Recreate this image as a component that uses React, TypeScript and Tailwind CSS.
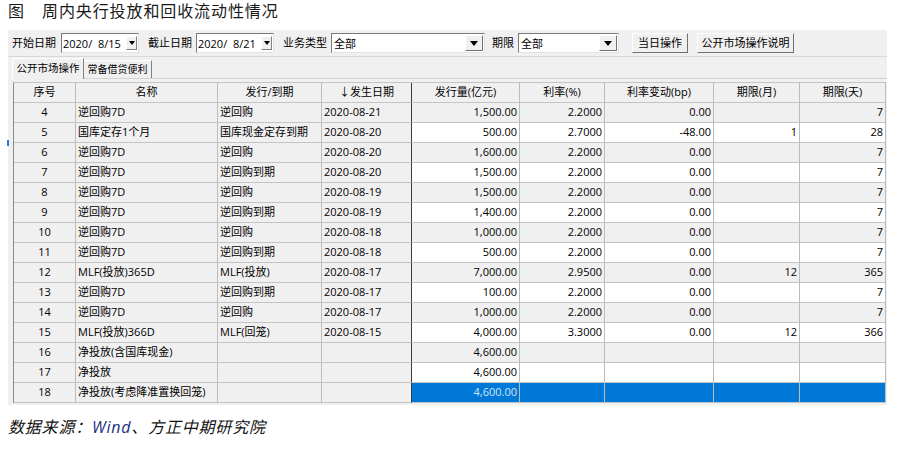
import React from "react";

const F = "font-['Open_Sans','Noto_Sans_CJK_SC',sans-serif]";
const COLS = "grid grid-cols-[62px_142px_104px_90px_108px_85px_109px_86px_86px]";

type Row = [string, string, string, string, string, string, string, string, string];

const rows: Row[] = [
  ["4", "逆回购7D", "逆回购", "2020-08-21", "1,500.00", "2.2000", "0.00", "", "7"],
  ["5", "国库定存1个月", "国库现金定存到期", "2020-08-20", "500.00", "2.7000", "-48.00", "1", "28"],
  ["6", "逆回购7D", "逆回购", "2020-08-20", "1,600.00", "2.2000", "0.00", "", "7"],
  ["7", "逆回购7D", "逆回购到期", "2020-08-20", "1,500.00", "2.2000", "0.00", "", "7"],
  ["8", "逆回购7D", "逆回购", "2020-08-19", "1,500.00", "2.2000", "0.00", "", "7"],
  ["9", "逆回购7D", "逆回购到期", "2020-08-19", "1,400.00", "2.2000", "0.00", "", "7"],
  ["10", "逆回购7D", "逆回购", "2020-08-18", "1,000.00", "2.2000", "0.00", "", "7"],
  ["11", "逆回购7D", "逆回购到期", "2020-08-18", "500.00", "2.2000", "0.00", "", "7"],
  ["12", "MLF(投放)365D", "MLF(投放)", "2020-08-17", "7,000.00", "2.9500", "0.00", "12", "365"],
  ["13", "逆回购7D", "逆回购到期", "2020-08-17", "100.00", "2.2000", "0.00", "", "7"],
  ["14", "逆回购7D", "逆回购", "2020-08-17", "1,000.00", "2.2000", "0.00", "", "7"],
  ["15", "MLF(投放)366D", "MLF(回笼)", "2020-08-15", "4,000.00", "3.3000", "0.00", "12", "366"],
  ["16", "净投放(含国库现金)", "", "", "4,600.00", "", "", "", ""],
  ["17", "净投放", "", "", "4,600.00", "", "", "", ""],
  ["18", "净投放(考虑降准置换回笼)", "", "", "4,600.00", "", "", "", ""],
];

const headers = ["序号", "名称", "发行/到期", "↓发生日期", "发行量(亿元)", "利率(%)", "利率变动(bp)", "期限(月)", "期限(天)"];

function Tri() {
  return (
    <svg width="8" height="5" viewBox="0 0 8 5">
      <path d="M0 0 H8 L4 5 Z" fill="#000" />
    </svg>
  );
}

function DateBox({ value }: { value: string }) {
  return (
    <div className="flex h-[20px] w-[78px] items-center justify-between border-l border-t border-l-[#7a7a7a] border-t-[#7a7a7a] border-b border-r border-b-[#e3e3e3] border-r-[#e3e3e3] bg-white pl-[1px] pr-[1px]">
      <span className="whitespace-pre text-[11px] leading-none text-black">{value}</span>
      <div className="flex h-[14px] w-[11px] items-center justify-center border border-b-[#808080] border-r-[#808080] border-l-white border-t-white bg-[#f0f0f0]">
        <svg width="6" height="4" viewBox="0 0 6 4">
          <path d="M0 0 H6 L3 4 Z" fill="#000" />
        </svg>
      </div>
    </div>
  );
}

function Combo({ w, value }: { w: string; value: string }) {
  return (
    <div className={`flex h-[20px] ${w} items-center justify-between border-l border-t border-l-[#7a7a7a] border-t-[#7a7a7a] border-b border-r border-b-[#e3e3e3] border-r-[#e3e3e3] bg-white pl-[2px] pr-[1px]`}>
      <span className="text-[11px] leading-none text-black">{value}</span>
      <div className="flex h-[16px] w-[18px] items-center justify-center border border-b-[#707070] border-r-[#707070] border-l-white border-t-white bg-[#f0f0f0]">
        <Tri />
      </div>
    </div>
  );
}

function Btn({ w, label, ml }: { w: string; label: string; ml: string }) {
  return (
    <div className={`${ml} flex h-[20px] ${w} items-center justify-center border border-b-[#707070] border-r-[#707070] border-l-white border-t-white bg-[#f0f0f0] text-[11px] text-black`}>
      {label}
    </div>
  );
}

export default function App() {
  return (
    <div className={`${F} relative h-[449px] w-[908px] overflow-hidden bg-white text-black`}>
      <div className="h-[22px] pl-[8px] text-[16px] leading-[22px] text-[#1a1a1a]">
        <span>图</span>
        <span className="ml-[18px] tracking-[0.9px]">周内央行投放和回收流动性情况</span>
      </div>

      <div className="relative ml-[8px] mt-[8px] w-[879px] bg-[#f0f0f0] pb-[2px]">
        {/* toolbar */}
        <div className="flex h-[26px] items-center pl-[4px] text-[11px]">
          <span>开始日期</span>
          <div className="ml-[5px]"><DateBox value="2020/  8/15" /></div>
          <span className="ml-[9px]">截止日期</span>
          <div className="ml-[4px]"><DateBox value="2020/  8/21" /></div>
          <span className="ml-[9px]">业务类型</span>
          <div className="ml-[4px]"><Combo w="w-[154px]" value="全部" /></div>
          <span className="ml-[7px]">期限</span>
          <div className="ml-[4px]"><Combo w="w-[101px]" value="全部" /></div>
          <Btn ml="ml-[13px]" w="w-[56px]" label="当日操作" />
          <Btn ml="ml-[9px]" w="w-[97px]" label="公开市场操作说明" />
        </div>
        <div className="h-[1px] bg-[#d8d8d8]" />
        {/* tabs */}
        <div className="relative flex h-[22px] items-end pl-[4px]">
          <div className="absolute bottom-0 left-[76px] right-0 h-[1px] bg-[#d4d4d4]" />
          <div className="relative z-10 flex h-[21px] w-[72px] items-center justify-center border-l border-r border-t border-l-white border-t-white border-r-[#808080] bg-[#f0f0f0] text-[10.5px]">
            公开市场操作
          </div>
          <div className="mb-[1px] flex h-[18px] w-[68px] items-center justify-center border-r border-t border-r-[#808080] border-t-white text-[10px]">
            常备借贷便利
          </div>
        </div>

        {/* table */}
        <div className="ml-[5px] mt-[3px] w-[873px] border-l border-t border-l-[#8a8a8a] border-t-[#c4c4c4]">
          <div className={COLS}>
            {headers.map((h, i) => (
              <div
                key={i}
                className={`flex h-[20px] items-center justify-center border-b border-r border-b-[#c4c4c4] bg-[#f0f0f0] text-[11px] ${i === 3 ? "border-r-[#3a3a3a]" : "border-r-[#bcbcbc]"}`}
              >
                {h}
              </div>
            ))}
          </div>
          {rows.map((r, ri) => {
            const sel = ri === rows.length - 1;
            const dataBg = sel ? "bg-[#0078d7] text-[#d2e5f6]" : ri % 2 === 0 ? "bg-[#f0f0f0]" : "bg-white";
            return (
              <div key={ri} className={COLS}>
                {r.map((c, ci) => {
                  const frozen = ci < 4;
                  const align = ci === 0 ? "justify-center" : frozen ? "justify-start pl-[2px]" : "justify-end pr-[2px]";
                  const bg = frozen ? "bg-[#f0f0f0]" : dataBg;
                  const br = ci === 3 ? "border-r-[#3a3a3a]" : "border-r-[#bcbcbc]";
                  return (
                    <div
                      key={ci}
                      className={`flex h-[20px] items-center overflow-hidden whitespace-nowrap border-b border-r border-b-[#c4c4c4] ${br} ${bg} ${align} text-[11px]`}
                    >
                      {c}
                    </div>
                  );
                })}
              </div>
            );
          })}
        </div>
        <div className="absolute left-[-1px] top-[110px] h-[6px] w-[2px] bg-[#2a7ad8]" />
      </div>

      <div className="ml-[8px] mt-[11px] h-[22px] text-[16px] italic leading-[22px] tracking-[0.8px] text-[#111]">
        数据来源：<span className="text-[#1b2f7a]">Wind</span>、方正中期研究院
      </div>
    </div>
  );
}
